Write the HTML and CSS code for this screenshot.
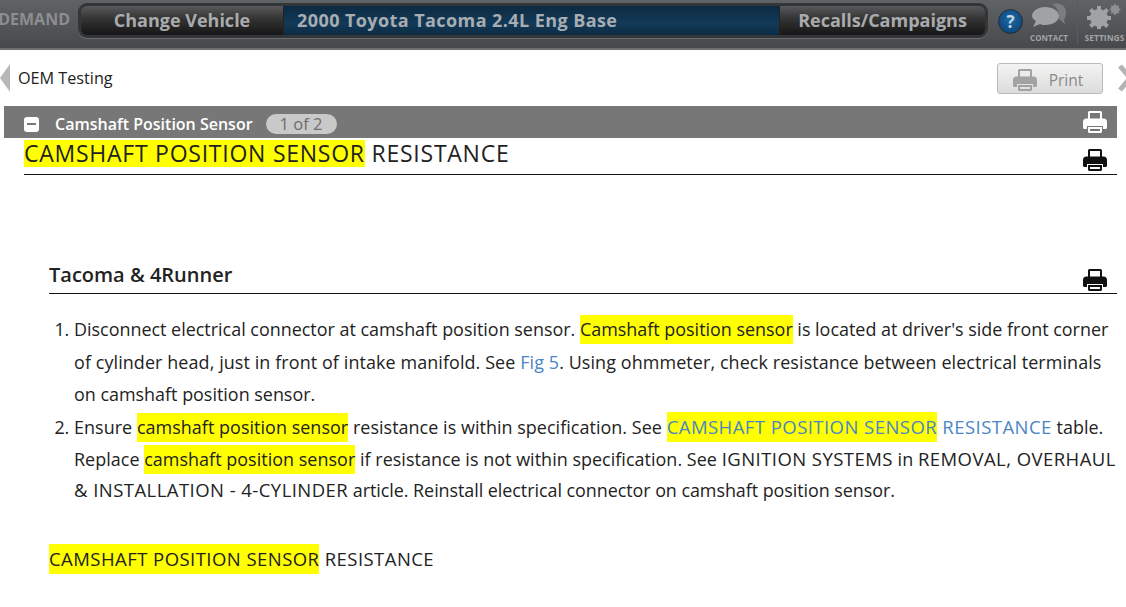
FILE: index.html
```html
<!DOCTYPE html>
<html lang="en">
<head>
<meta charset="utf-8">
<title>OEM Testing</title>
<link rel="stylesheet" href="styles.css">
</head>
<body>
<svg class="defs" width="0" height="0" aria-hidden="true">
  <symbol id="printer" viewBox="0 0 24 22">
    <path d="M5 8V1.500A1.500 1.500 0 0 1 6.500 0h11A1.500 1.500 0 0 1 19 1.500V8h-2V2H7v6z"/>
    <path d="M3.500 7.500h17A3.500 3.500 0 0 1 24 11v5.500a1.500 1.500 0 0 1-1.500 1.500H20v-3H4v3H1.500A1.500 1.500 0 0 1 0 16.500V11a3.500 3.500 0 0 1 3.500-3.500z"/>
    <path d="M5 16h14v4.500a1.500 1.500 0 0 1-1.500 1.500h-11A1.500 1.500 0 0 1 5 20.500zm2 2v2h10v-2z"/>
  </symbol>
</svg>
<header class="topbar">
  <div class="logo"><span>DEMAND</span></div>
  <nav class="nav">
    <a class="nav-btn change">Change Vehicle</a>
    <div class="vehicle">2000 Toyota Tacoma 2.4L Eng Base</div>
    <a class="nav-btn recalls">Recalls/Campaigns</a>
  </nav>
  <div class="help">?</div>
  <div class="tool contact">
    <svg width="36" height="26" viewBox="0 0 36 26">
      <path class="bubble-back" d="M21 1c7-2 14 1 14 8 0 3-1 6-2 8l1 4-6-5c1-6-2-12-7-15z"/>
      <path class="bubble-front" d="M14 4c8 0 14 4 14 9s-6 9-14 9c-2 0-3 0-5-1l-7 3 3-6c-2-1-4-3-4-5 0-5 6-9 13-9z"/>
    </svg>
    <span>CONTACT</span>
  </div>
  <div class="tool settings">
    <svg width="40" height="26" viewBox="0 0 40 26">
      <g class="gear-big"><circle cx="14" cy="15" r="6.500" stroke-width="5"/><path d="M14 3v24M2 15h24M5.500 6.500l17 17M22.500 6.500l-17 17" stroke-width="4"/></g>
      <g class="gear-small"><circle cx="30" cy="6.500" r="3.200" stroke-width="2"/><path d="M30 1v11M24.500 6.500h11M26.200 2.700l7.600 7.600M33.800 2.700l-7.600 7.600" stroke-width="1.600"/></g>
    </svg>
    <span>SETTINGS</span>
  </div>
</header>

<div class="subbar">
  <i class="arrow"></i>
  <h1 class="page-title">OEM Testing</h1>
  <a class="print-btn"><svg class="ico" width="24" height="22"><use href="#printer"/></svg>Print</a>
  <svg class="close" width="24" height="28" viewBox="0 0 24 28"><path d="M2 2l20 24M22 2L2 26"/></svg>
</div>

<section class="section">
  <div class="section-bar">
    <span class="minus"><i></i></span>
    <strong class="section-title">Camshaft Position Sensor</strong>
    <span class="pill">1 of 2</span>
    <svg class="ico white" width="24" height="22"><use href="#printer"/></svg>
  </div>

  <div class="article">
    <div class="title-row">
      <h2><mark>CAMSHAFT POSITION SENSOR</mark> RESISTANCE</h2>
      <svg class="ico black" width="24" height="22"><use href="#printer"/></svg>
    </div>

    <div class="body">
      <div class="sub-row">
        <h3>Tacoma &amp; 4Runner</h3>
        <svg class="ico black" width="24" height="22"><use href="#printer"/></svg>
      </div>
      <ol class="steps">
        <li>
          <span class="ln">Disconnect electrical connector at camshaft position sensor. <mark>Camshaft position sensor</mark> is located at driver's side front corner</span>
          <span class="ln wide">of cylinder head, just in front of intake manifold. See <a>Fig 5</a>. Using ohmmeter, check resistance between electrical terminals</span>
          <span class="ln">on camshaft position sensor.</span>
        </li>
        <li>
          <span class="ln fourth">Ensure <mark>camshaft position sensor</mark> resistance is within specification. See <a class="caps"><mark>CAMSHAFT POSITION SENSOR</mark> RESISTANCE</a> table.</span>
          <span class="ln fifth">Replace <mark>camshaft position sensor</mark> if resistance is not within specification. See <span class="caps">IGNITION SYSTEMS</span> in <span class="caps">REMOVAL, OVERHAUL</span></span>
          <span class="ln last"><span class="caps">&amp; INSTALLATION - 4-CYLINDER</span> article. Reinstall electrical connector on camshaft position sensor.</span>
        </li>
      </ol>
      <p class="table-title caps"><mark>CAMSHAFT POSITION SENSOR</mark> RESISTANCE</p>
    </div>
  </div>
</section>
</body>
</html>
```
FILE: styles.css
```css
* { box-sizing: border-box; }
html, body { margin: 0; height: 607px; overflow: hidden; }
body { background: #fff; color: #222; font-family: "Open Sans", "Noto Sans", sans-serif; }
.defs { position: absolute; }
mark { background: #ff0; color: inherit; padding: 2px 0 3px; }
.ico { display: block; flex: none; }
.ico.white { fill: #fff; }
.ico.black { fill: #111; }

.topbar { height: 50px; display: flex; align-items: flex-start; overflow: hidden;
  background: linear-gradient(#606366, #47494c); border-bottom: 2px solid #6d6f71; }
.logo { width: 70px; flex: none; height: 38px; overflow: hidden; display: flex; justify-content: flex-end; align-items: center; }
.logo span { font: 700 16px "Open Sans", sans-serif; color: #8c8e90; white-space: nowrap; }
.nav { margin: 3px 0 0 8px; width: 910px; height: 35px; flex: none; display: flex; padding: 3px; border-radius: 9px;
  background: #333537; box-shadow: 0 1px 0 #6a6c6e; }
.nav-btn { display: flex; align-items: center; justify-content: center; padding-bottom: 2px; font-weight: 700; font-size: 18px; color: #a9abad;
  background: linear-gradient(#58595b, #333 45%, #161616); }
.change { width: 202px; border-radius: 6px 0 0 6px; }
.recalls { width: 205px; border-radius: 0 6px 6px 0; }
.vehicle { flex: 1; padding: 0 0 2px 13px; display: flex; align-items: center; font-weight: 700; font-size: 18px; letter-spacing: .42px; color: #a8adb2;
  background: linear-gradient(#0d2a42, #123a58 60%, #0c2b44); border-left: 1px solid #222; border-right: 1px solid #222; }
.help { margin: 9px 0 0 10px; width: 25px; height: 25px; flex: none; border-radius: 50%; background: radial-gradient(circle at 50% 40%, #1a6cab, #0a3b69);
  border: 1px solid #2a2d30; color: #c8d4de; font-weight: 700; font-size: 17px; line-height: 23px; text-align: center; }
.tool { display: flex; flex-direction: column; align-items: center; flex: none; height: 44px; font-size: 8px; font-weight: 700; color: #a0a2a4; }
.tool svg { display: block; margin-top: 3px; }
.tool span { margin-top: 4px; line-height: 10px; white-space: nowrap; }
.contact { width: 54px; margin-left: 1px; border-right: 1px solid #5a5c5e; padding-right: 3px; }
.settings { width: 49px; padding-left: 4px; font-size: 8.500px; }
.bubble-back { fill: #7b7d7f; }
.bubble-front { fill: #a0a2a4; }
.gear-big circle, .gear-big path { fill: none; stroke: #a0a2a4; }
.gear-small circle, .gear-small path { fill: none; stroke: #8e9092; }

.subbar { height: 56px; display: flex; align-items: center; position: relative; overflow: hidden; }
.arrow { width: 0; height: 0; border-style: solid; border-width: 14px 10px 14px 0; border-color: transparent #b8b8b8 transparent transparent; flex: none; }
.page-title { margin: 0 0 0 8px; font-size: 16.200px; font-weight: 400; color: #222; flex: 1; }
.print-btn { width: 106px; height: 31px; margin: 0 23px 0 0; padding: 4px 4px 0 0; display: flex; align-items: center; justify-content: center; gap: 12px; flex: none;
  border: 1px solid #bbb; border-radius: 3px; background: linear-gradient(#f3f3f3, #dcdcdc); color: #8a8a8a; font-size: 15.500px; fill: #a2a2a2; }
.close { position: absolute; right: -16px; top: 14px; fill: none; stroke: #b4b4b4; stroke-width: 5; }

.section { margin: 0 9px 0 4px; }
.section-bar { height: 32px; background: #777; display: flex; align-items: center; padding: 4px 10px 0 20px; color: #fff; }
.section-bar .ico { margin-top: -4px; }
.minus { width: 15px; height: 15px; border-radius: 3px; background: #fff; display: flex; align-items: center; justify-content: center; flex: none; }
.minus i { width: 9px; height: 2px; background: #777; }
.section-title { margin-left: 16px; font-size: 16px; font-weight: 600; }
.pill { margin: 0 auto 0 13px; height: 20px; width: 71px; flex: none; border-radius: 10px; background: #c9c9c9; color: #6c6c6c; font-size: 16.500px; font-weight: 500; line-height: 20px; text-align: center; }

.article { padding-left: 20px; }
.title-row { height: 37px; display: flex; align-items: flex-start; justify-content: space-between; border-bottom: 1px solid #111; padding-right: 10px; }
.title-row h2 { margin: 0; font-size: 23px; font-weight: 500; letter-spacing: .75px; line-height: 31px; white-space: nowrap; }
.title-row h2 mark { padding: 0; background: linear-gradient(transparent 3px, #ff0 3px, #ff0 30px, transparent 30px); }
.title-row .ico { margin-top: 11px; }
.body { padding-left: 25px; }
.sub-row { margin-top: 87px; height: 32px; display: flex; justify-content: space-between; align-items: flex-start; border-bottom: 1px solid #111; padding-right: 10px; }
.sub-row h3 { margin: 0; font-size: 20px; font-weight: 600; line-height: 26px; }
.sub-row .ico { margin-top: 7px; }
.steps { margin: 19px 0 0; padding: 0 0 0 25px; font-size: 17.930px; line-height: 32.500px; white-space: nowrap; }
.steps a { color: #4a86c5; }
.caps { font-size: 18.500px; letter-spacing: .45px; }
.ln { display: block; }
.ln.wide { letter-spacing: .1px; }
.ln.fourth { letter-spacing: .05px; }
.ln.fifth { letter-spacing: .04px; }
.ln.last { margin-top: -2px; letter-spacing: -.05px; }
.table-title { margin: 37px 0 0; line-height: 32px; }
```
